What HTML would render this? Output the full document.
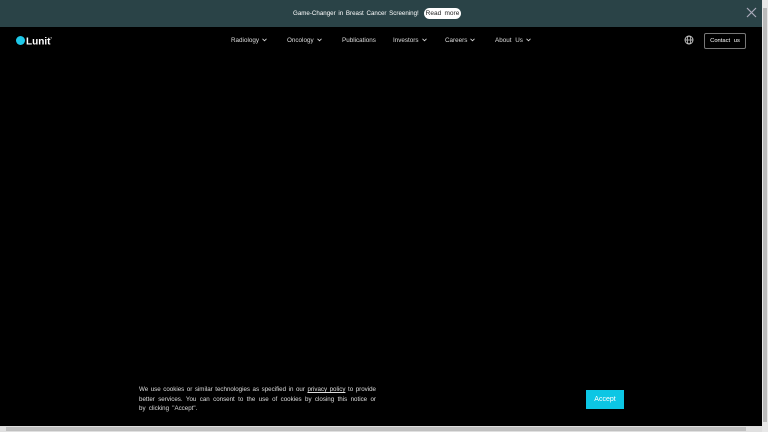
<!DOCTYPE html>
<html><head><style>
*{margin:0;padding:0;box-sizing:border-box}
body{width:768px;height:432px;background:#000;font-family:"Liberation Sans",sans-serif;color:#fff;position:relative;overflow:hidden}
.ban{position:absolute;left:0;top:0;width:762px;height:27px;background:#2a4347;font-size:6.2px;}
.ban .t{position:absolute;left:293px;top:10px;word-spacing:1px;white-space:nowrap}
.ban .b{position:absolute;left:424px;top:8px;width:37px;height:11px;background:#fff;color:#222;border-radius:6px;font-size:6.5px;text-align:center;line-height:11px;word-spacing:1.5px}
.x{position:absolute;left:746px;top:7px}
.nav{position:absolute;top:37px;height:8px;font-size:6.3px;line-height:8px;color:#ddd;white-space:nowrap}
.nav svg{margin-left:3px;vertical-align:0px}
.logo{position:absolute;left:16px;top:36px;font-size:10px;font-weight:bold}
.dot{display:inline-block;width:9px;height:9px;border-radius:50%;background:#1ec8e8;vertical-align:-1px;margin-right:1px}
.ct{position:absolute;left:704px;top:33px;width:42px;height:16px;border:1px solid #777;border-radius:2px;font-size:5.8px;text-align:center;line-height:14px;word-spacing:2px}
.ck{position:absolute;left:139px;top:385px;width:237px;font-size:6.2px;line-height:9.7px;color:#ddd}
.ck div{white-space:nowrap;text-align:justify;text-align-last:justify}
.ck div.l{text-align-last:left;word-spacing:1.5px}
.ck u{color:#ddd}
.acc{position:absolute;left:586px;top:390px;width:38px;height:19px;background:#0cc6e4;font-size:7px;text-align:center;line-height:19px}
.vs{position:absolute;left:762px;top:0;width:6px;height:432px;background:#e8e8e8}
.vs i{position:absolute;left:1px;top:8px;width:4px;height:414px;background:#bbb}
.hs{position:absolute;left:0;top:426px;width:762px;height:6px;background:#e0e0e0}
.hs i{position:absolute;left:6px;top:1px;width:740px;height:4px;background:#c0c0c0}
</style></head><body>
<div class="ban"><span class="t">Game-Changer in Breast Cancer Screening!</span><span class="b">Read more</span>
<svg class="x" width="11" height="11"><path d="M1 1L10 10M10 1L1 10" stroke="#aab" stroke-width="1.2"/></svg></div>
<div class="logo"><span class="dot"></span>Lunit<sup style="font-size:4px">°</sup></div>
<div class="nav" style="left:231px">Radiology<svg width="5" height="4"><path d="M.5 .8L2.5 2.8L4.5 .8" stroke="#ddd" fill="none" stroke-width=".8"/></svg></div>
<div class="nav" style="left:287px">Oncology<svg width="5" height="4"><path d="M.5 .8L2.5 2.8L4.5 .8" stroke="#ddd" fill="none" stroke-width=".8"/></svg></div>
<div class="nav" style="left:342px">Publications</div>
<div class="nav" style="left:393px">Investors<svg width="5" height="4"><path d="M.5 .8L2.5 2.8L4.5 .8" stroke="#ddd" fill="none" stroke-width=".8"/></svg></div>
<div class="nav" style="left:445px">Careers<svg width="5" height="4"><path d="M.5 .8L2.5 2.8L4.5 .8" stroke="#ddd" fill="none" stroke-width=".8"/></svg></div>
<div class="nav" style="left:495px;word-spacing:2px">About Us<svg width="5" height="4"><path d="M.5 .8L2.5 2.8L4.5 .8" stroke="#ddd" fill="none" stroke-width=".8"/></svg></div>
<svg style="position:absolute;left:684px;top:35px" width="10" height="10"><circle cx="5" cy="5" r="4" fill="none" stroke="#ccc" stroke-width=".9"/><ellipse cx="5" cy="5" rx="1.8" ry="4" fill="none" stroke="#ccc" stroke-width=".8"/><path d="M1 5H9" stroke="#ccc" stroke-width=".8"/></svg>
<div class="ct">Contact us</div>
<div class="ck"><div>We use cookies or similar technologies as specified in our <u>privacy policy</u> to provide</div><div>better services. You can consent to the use of cookies by closing this notice or</div><div class="l">by clicking "Accept".</div></div>
<div class="acc">Accept</div>
<div class="vs"><i></i></div><div class="hs"><i></i></div>
</body></html>
